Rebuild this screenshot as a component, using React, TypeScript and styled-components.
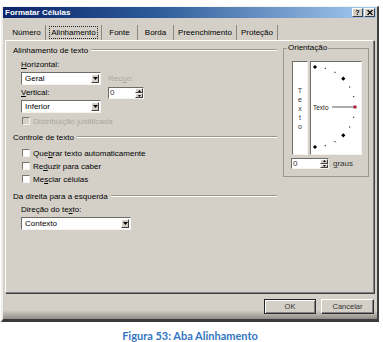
import React from 'react';
import styled, { createGlobalStyle } from 'styled-components';

const GlobalStyle = createGlobalStyle`
  html, body { margin: 0; padding: 0; background: #fff; }
  body { font-family: "Liberation Sans", Arial, sans-serif; color: #000; }
  * { box-sizing: border-box; }
`;

const face = '#d4d0c8';

const Page = styled.div`
  width: 383px;
  height: 342px;
  padding: 6px 0 0 1px;
  background: #fff;
  overflow: hidden;
  display: flex;
  flex-direction: column;
`;

const Dialog = styled.div`
  width: 378px;
  height: 316px;
  border-top: 1px solid #f4f3ef;
  border-left: 2px solid #efeee9;
  border-right: 2px solid #404040;
  border-bottom: 3px solid #3a3a3a;
  background: linear-gradient(to bottom, ${face} 0, ${face} calc(100% - 9px), #8f8d88 100%);
  display: flex;
  flex-direction: column;
`;

const TitleBar = styled.div`
  height: 11px;
  margin-right: 1px;
  padding: 0 1px 0 2px;
  background: linear-gradient(to right, #0a246a 0%, #2c5a98 40%, #a6caf0 100%);
  display: flex;
  align-items: center;
  gap: 1px;
`;

const Title = styled.div`
  flex: 1;
  color: #fff;
  font-weight: bold;
  font-size: 8px;
  line-height: 11px;
`;

const TitleButton = styled.div`
  width: 11px;
  height: 9px;
  background: ${face};
  border-top: 1px solid #fff;
  border-left: 1px solid #fff;
  border-right: 1px solid #404040;
  border-bottom: 1px solid #404040;
  display: flex;
  align-items: center;
  justify-content: center;
  font-size: 7px;
  font-weight: bold;
  line-height: 7px;
`;

const TabRow = styled.div`
  display: flex;
  height: 15px;
  margin-top: 7px;
  padding-left: 5px;
`;

const Tab = styled.div<{ $w: number }>`
  width: ${(p) => p.$w}px;
  height: 15px;
  display: flex;
  align-items: center;
  justify-content: center;
  font-size: 8px;
  border-right: 1px solid #8a8780;
`;

const Focus = styled.span`
  outline: 1px dotted #222;
  padding: 1px 1px;
`;

const Panel = styled.div`
  height: 253px;
  margin: 0 3px 0 2px;
  border-top: 1px solid #fff;
  border-left: 1px solid #fff;
  border-right: 1px solid #808080;
  border-bottom: 1px solid #808080;
  box-shadow: 1px 1px 0 #404040;
  padding: 4px 4px 0 7px;
  display: flex;
  gap: 6px;
  align-items: flex-start;
`;

const LeftCol = styled.div`
  width: 264px;
  display: flex;
  flex-direction: column;
`;

const GroupHead = styled.div<{ $mt?: number }>`
  display: flex;
  align-items: center;
  gap: 3px;
  height: 10px;
  margin-top: ${(p) => p.$mt ?? 0}px;
  font-size: 8px;
  &::after {
    content: '';
    flex: 1;
    border-top: 1px solid #9a978f;
    border-bottom: 1px solid #fff;
  }
`;

const Indent = styled.div<{ $mt?: number }>`
  padding-left: 8px;
  margin-top: ${(p) => p.$mt ?? 0}px;
  display: flex;
  flex-direction: column;
`;

const Label = styled.div<{ $mt?: number; $disabled?: boolean }>`
  height: 10px;
  line-height: 10px;
  font-size: 8px;
  margin-top: ${(p) => p.$mt ?? 0}px;
  color: ${(p) => (p.$disabled ? '#aaa79f' : '#000')};
  white-space: nowrap;
`;

const U = styled.span`
  text-decoration: underline;
`;

const SelectBox = styled.div<{ $w: number; $mt?: number }>`
  width: ${(p) => p.$w}px;
  height: 13px;
  margin-top: ${(p) => p.$mt ?? 0}px;
  background: #fff;
  border-top: 1px solid #6e6c67;
  border-left: 1px solid #6e6c67;
  border-right: 1px solid #f4f3ef;
  border-bottom: 1px solid #f4f3ef;
  display: flex;
  align-items: stretch;
  padding: 1px;
`;

const SelectText = styled.div`
  flex: 1;
  font-size: 8px;
  line-height: 9px;
  padding-left: 2px;
`;

const DropButton = styled.div`
  width: 8px;
  background: ${face};
  border-top: 1px solid #fff;
  border-left: 1px solid #fff;
  border-right: 1px solid #404040;
  border-bottom: 1px solid #404040;
  display: flex;
  align-items: center;
  justify-content: center;
`;

const Spin = styled.div<{ $w: number; $h: number }>`
  width: ${(p) => p.$w}px;
  height: ${(p) => p.$h}px;
  background: #fff;
  border-top: 1px solid #6e6c67;
  border-left: 1px solid #6e6c67;
  border-right: 1px solid #f4f3ef;
  border-bottom: 1px solid #f4f3ef;
  display: flex;
  padding: 0 0 0 1px;
`;

const SpinText = styled.div`
  flex: 1;
  font-size: 8px;
  line-height: 10px;
  color: #333;
`;

const SpinButtons = styled.div`
  width: 8px;
  display: flex;
  flex-direction: column;
`;

const SpinHalf = styled.div`
  flex: 1;
  background: ${face};
  border-top: 1px solid #fff;
  border-left: 1px solid #fff;
  border-right: 1px solid #404040;
  border-bottom: 1px solid #404040;
  display: flex;
  align-items: center;
  justify-content: center;
`;

const AlignRow = styled.div`
  display: flex;
  margin-top: 5px;
`;

const AlignLeft = styled.div`
  width: 80px;
  display: flex;
  flex-direction: column;
`;

const AlignRight = styled.div`
  margin-left: 7px;
  padding-top: 14px;
  display: flex;
  flex-direction: column;
  gap: 3px;
`;

const CheckRow = styled.div<{ $mt?: number; $disabled?: boolean }>`
  display: flex;
  align-items: center;
  gap: 3px;
  height: 10px;
  margin-top: ${(p) => p.$mt ?? 0}px;
  font-size: 8px;
  color: ${(p) => (p.$disabled ? '#aaa79f' : '#000')};
  white-space: nowrap;
`;

const Box = styled.div<{ $disabled?: boolean }>`
  width: 8px;
  height: 8px;
  margin-left: 1px;
  background: ${(p) => (p.$disabled ? face : '#fff')};
  border-top: 1px solid #7a7872;
  border-left: 1px solid #7a7872;
  border-right: 1px solid #f4f3ef;
  border-bottom: 1px solid #f4f3ef;
`;

const Group = styled.fieldset`
  width: 86px;
  height: 134px;
  margin: -2px 0 0 0;
  padding: 8px 0 0 8px;
  border: 1px solid #9a978f;
  min-width: 0;
`;

const Legend = styled.legend`
  font-size: 8px;
  line-height: 10px;
  padding: 0 1px;
  margin-left: -5px;
`;

const OrientRow = styled.div`
  display: flex;
  gap: 2px;
`;

const VerticalBox = styled.div`
  width: 16px;
  height: 94px;
  background: #fff;
  border-top: 1px solid #6e6c67;
  border-left: 1px solid #6e6c67;
  border-right: 1px solid #f4f3ef;
  border-bottom: 1px solid #f4f3ef;
  display: flex;
  flex-direction: column;
  align-items: center;
  justify-content: center;
  font-size: 7px;
  line-height: 9px;
  color: #333;
`;

const DialBox = styled.div`
  width: 52px;
  height: 94px;
  background: #fff;
  border-top: 1px solid #6e6c67;
  border-left: 1px solid #6e6c67;
  border-right: 1px solid #f4f3ef;
  border-bottom: 1px solid #f4f3ef;
`;

const DegreeRow = styled.div`
  display: flex;
  align-items: center;
  gap: 4px;
  margin-top: 3px;
  margin-left: -1px;
  font-size: 8px;
  color: #333;
`;

const Footer = styled.div`
  display: flex;
  justify-content: flex-end;
  gap: 5px;
  margin-top: 6px;
  padding-right: 3px;
`;

const Button = styled.div<{ $w: number; $default?: boolean }>`
  width: ${(p) => p.$w}px;
  height: 15px;
  background: ${face};
  border-top: 1px solid ${(p) => (p.$default ? '#222' : '#fff')};
  border-left: 1px solid ${(p) => (p.$default ? '#222' : '#fff')};
  border-right: 1px solid #303030;
  border-bottom: 1px solid #303030;
  box-shadow: ${(p) => (p.$default ? 'inset 1px 1px 0 #fff, inset -1px -1px 0 #808080' : 'inset -1px -1px 0 #808080')};
  display: flex;
  align-items: center;
  justify-content: center;
  font-size: 7.5px;
  color: #333;
`;

const Caption = styled.div`
  margin-top: 9px;
  text-align: center;
  font-family: Lato, "Liberation Sans", sans-serif;
  font-weight: bold;
  font-size: 11px;
  line-height: 10px;
  color: #3576c4;
  padding-right: 4px;
`;

const Arrow = () => (
  <svg width="5" height="3" viewBox="0 0 5 3">
    <path d="M0 0 L5 0 L2.5 3 Z" fill="#000" />
  </svg>
);

const Select = ({ value, width, mt }: { value: string; width: number; mt?: number }) => (
  <SelectBox $w={width} $mt={mt}>
    <SelectText>{value}</SelectText>
    <DropButton>
      <Arrow />
    </DropButton>
  </SelectBox>
);

const SpinField = ({ w, h }: { w: number; h: number }) => (
  <Spin $w={w} $h={h}>
    <SpinText>0</SpinText>
    <SpinButtons>
      <SpinHalf>
        <svg width="3" height="2" viewBox="0 0 3 2"><path d="M0 2 L3 2 L1.5 0 Z" fill="#000" /></svg>
      </SpinHalf>
      <SpinHalf>
        <svg width="3" height="2" viewBox="0 0 3 2"><path d="M0 0 L3 0 L1.5 2 Z" fill="#000" /></svg>
      </SpinHalf>
    </SpinButtons>
  </Spin>
);

const Dial = () => {
  const cx = 4;
  const cy = 45;
  const r = 40;
  const dots = [];
  for (let a = -90; a <= 90; a += 15) {
    const rad = (a * Math.PI) / 180;
    const x = cx + r * Math.cos(rad);
    const y = cy - r * Math.sin(rad);
    if (a === 0) {
      dots.push(<rect key={a} x={x - 1.5} y={y - 1.5} width={3} height={3} fill="#b0203a" />);
    } else if (a % 45 === 0) {
      dots.push(<rect key={a} x={x - 1.5} y={y - 1.5} width={3} height={3} fill="#000" transform={`rotate(45 ${x} ${y})`} />);
    } else {
      dots.push(<rect key={a} x={x - 0.6} y={y - 0.6} width={1.2} height={1.2} fill="#333" />);
    }
  }
  return (
    <svg width="50" height="92" viewBox="0 0 50 92">
      <text x="2" y="47.5" fontSize="6.5" fontFamily="Liberation Sans, Arial, sans-serif" fill="#222">Texto</text>
      <line x1="21" y1="45" x2="43" y2="45" stroke="#333" strokeWidth="0.8" />
      {dots}
    </svg>
  );
};

const tabs = [
  { label: 'Número', width: 38 },
  { label: 'Alinhamento', width: 56, active: true },
  { label: 'Fonte', width: 36 },
  { label: 'Borda', width: 36 },
  { label: 'Preenchimento', width: 63 },
  { label: 'Proteção', width: 41 },
];

export default function App() {
  return (
    <Page>
      <GlobalStyle />
      <Dialog>
        <TitleBar>
          <Title>Formatar Células</Title>
          <TitleButton>?</TitleButton>
          <TitleButton>
            <svg width="6" height="5" viewBox="0 0 6 5">
              <path d="M0.5 0 L5.5 5 M5.5 0 L0.5 5" stroke="#000" strokeWidth="1.2" />
            </svg>
          </TitleButton>
        </TitleBar>

        <TabRow>
          {tabs.map((t) => (
            <Tab key={t.label} $w={t.width}>
              {t.active ? <Focus>{t.label}</Focus> : t.label}
            </Tab>
          ))}
        </TabRow>

        <Panel>
          <LeftCol>
            <GroupHead>Alinhamento de texto</GroupHead>
            <Indent>
              <AlignRow>
                <AlignLeft>
                  <Label><U>H</U>orizontal:</Label>
                  <Select value="Geral" width={80} mt={2} />
                  <Label $mt={3}><U>V</U>ertical:</Label>
                  <Select value="Inferior" width={80} mt={2} />
                </AlignLeft>
                <AlignRight>
                  <Label $disabled>Rec<U>u</U>o:</Label>
                  <SpinField w={36} h={12} />
                </AlignRight>
              </AlignRow>
              <CheckRow $mt={3} $disabled>
                <Box $disabled />
                <span>Distribuição <U>j</U>ustificada</span>
              </CheckRow>
            </Indent>

            <GroupHead $mt={6}>Controle de texto</GroupHead>
            <Indent $mt={6}>
              <CheckRow>
                <Box />
                <span>Que<U>b</U>rar texto automaticamente</span>
              </CheckRow>
              <CheckRow $mt={3}>
                <Box />
                <span>Re<U>d</U>uzir para caber</span>
              </CheckRow>
              <CheckRow $mt={3}>
                <Box />
                <span>Me<U>s</U>clar células</span>
              </CheckRow>
            </Indent>

            <GroupHead $mt={7}>Da direita para a esquerda</GroupHead>
            <Indent $mt={4}>
              <Label>Direção do te<U>x</U>to:</Label>
              <Select value="Contexto" width={110} mt={2} />
            </Indent>
          </LeftCol>

          <Group>
            <Legend>Orientação</Legend>
            <OrientRow>
              <VerticalBox>
                {'Texto'.split('').map((c, i) => (
                  <span key={i}>{c}</span>
                ))}
              </VerticalBox>
              <DialBox>
                <Dial />
              </DialBox>
            </OrientRow>
            <DegreeRow>
              <SpinField w={38} h={11} />
              <span><U>g</U>raus</span>
            </DegreeRow>
          </Group>
        </Panel>

        <Footer>
          <Button $w={52} $default>OK</Button>
          <Button $w={53}>Cancelar</Button>
        </Footer>
      </Dialog>
      <Caption>Figura 53: Aba Alinhamento</Caption>
    </Page>
  );
}
